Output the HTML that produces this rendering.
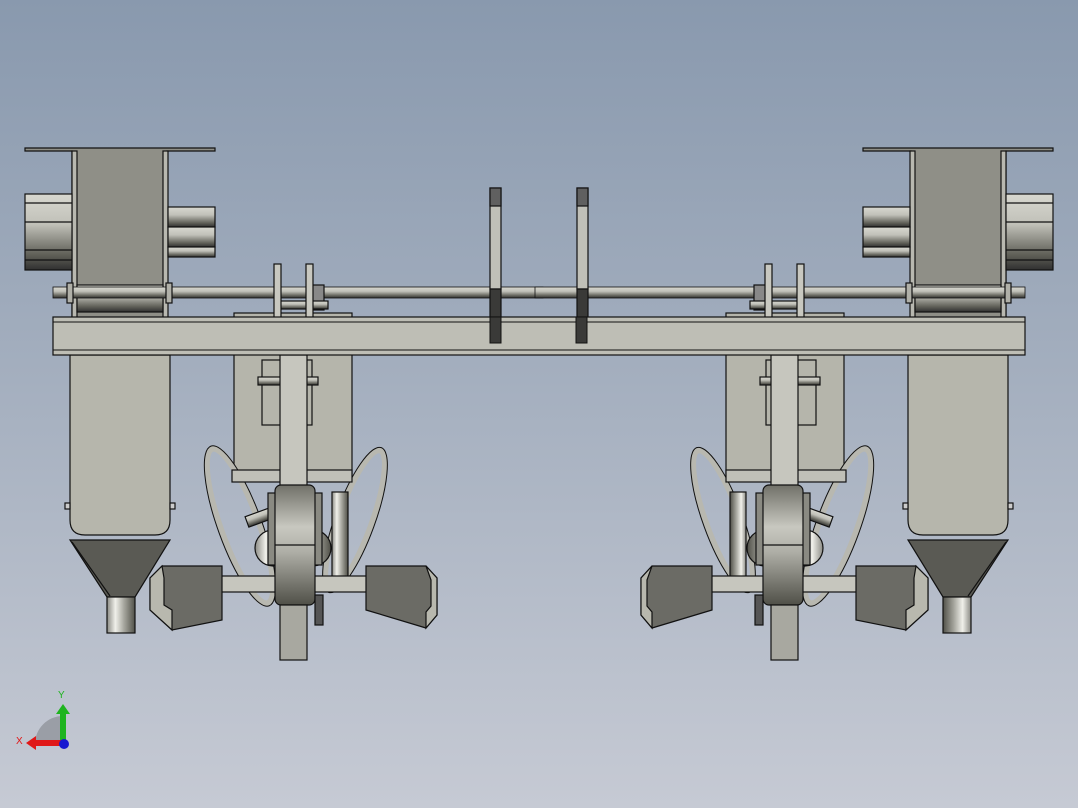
<!DOCTYPE html>
<html><head><style>
html,body{margin:0;padding:0;width:1078px;height:808px;overflow:hidden}
body{background:linear-gradient(#8999ae 0%,#a3aebe 45%,#c6cad4 100%)}
svg{position:absolute;left:0;top:0}
</style></head><body>
<svg width="1078" height="808" viewBox="0 0 1078 808">
<defs>
<linearGradient id="cylH" x1="0" y1="0" x2="0" y2="1">
<stop offset="0" stop-color="#d8d8d0"/><stop offset=".4" stop-color="#c0c0b8"/><stop offset=".8" stop-color="#606058"/><stop offset="1" stop-color="#303030"/></linearGradient>
<linearGradient id="cylV" x1="0" y1="0" x2="1" y2="0">
<stop offset="0" stop-color="#8a8a84"/><stop offset=".3" stop-color="#f0f0ea"/><stop offset=".6" stop-color="#a8a8a0"/><stop offset="1" stop-color="#505048"/></linearGradient>
<linearGradient id="wheel" x1="0" y1="0" x2="0" y2="1">
<stop offset="0" stop-color="#707068"/><stop offset=".35" stop-color="#c8c8c0"/><stop offset=".55" stop-color="#b0b0a8"/><stop offset="1" stop-color="#505048"/></linearGradient>
<g id="half" stroke="#111" stroke-width="1.2">
<path d="M25 148H215V151H167V318H72V151H25Z" fill="#8f8f87"/>
<rect x="72" y="151" width="5" height="167" fill="#b8b8b0"/>
<rect x="163" y="151" width="5" height="167" fill="#b8b8b0"/>
<rect x="25" y="194" width="47" height="76" fill="url(#cylH)"/>
<line x1="25" y1="203" x2="72" y2="203"/><line x1="25" y1="222" x2="72" y2="222"/><line x1="25" y1="250" x2="72" y2="250"/><line x1="25" y1="260" x2="72" y2="260"/>
<rect x="168" y="207" width="47" height="20" fill="url(#cylH)"/>
<rect x="168" y="227" width="47" height="20" fill="url(#cylH)"/>
<rect x="168" y="247" width="47" height="10" fill="url(#cylH)"/>
<rect x="77" y="285" width="86" height="27" fill="url(#cylH)"/>
<rect x="53" y="287" width="490" height="11" fill="url(#cylH)" stroke-width="0.8"/>
<rect x="67" y="283" width="6" height="20" fill="#b0b0a8"/>
<rect x="166" y="283" width="6" height="20" fill="#b0b0a8"/>
<rect x="312" y="285" width="12" height="25" fill="#888"/>
<rect x="280" y="301" width="48" height="8" fill="url(#cylH)"/>
<rect x="234" y="313" width="118" height="162" fill="#b5b5ab"/>
<rect x="274" y="264" width="7" height="54" fill="#c8c8c0"/>
<rect x="306" y="264" width="7" height="54" fill="#c8c8c0"/>
<path d="M70 355H170V520Q170 535 155 535H85Q70 535 70 520Z" fill="#b6b6ac"/>
<rect x="170" y="503" width="5" height="6" fill="#ccc"/><rect x="65" y="503" width="5" height="6" fill="#ccc"/>
<path d="M70 540H170L135 597H107Z" fill="#5a5a54"/>
<path d="M72 542L110 596" fill="none"/>
<rect x="107" y="597" width="28" height="36" fill="url(#cylV)"/>
<ellipse cx="240" cy="526" rx="17" ry="80" transform="rotate(-20 240 526)" fill="none" stroke="#111"/>
<ellipse cx="240" cy="526" rx="19" ry="82" transform="rotate(-20 240 526)" fill="none" stroke="#b8b8b0" stroke-width="6"/>
<ellipse cx="240" cy="526" rx="22" ry="85" transform="rotate(-20 240 526)" fill="none" stroke="#111" stroke-width="1"/>
<ellipse cx="355" cy="520" rx="15" ry="72" transform="rotate(20 355 520)" fill="none" stroke="#111"/>
<ellipse cx="355" cy="520" rx="17" ry="74" transform="rotate(20 355 520)" fill="none" stroke="#b8b8b0" stroke-width="6"/>
<ellipse cx="355" cy="520" rx="20" ry="77" transform="rotate(20 355 520)" fill="none" stroke="#111" stroke-width="1"/>
<rect x="246" y="512" width="26" height="11" fill="url(#cylH)" transform="rotate(-20 259 517)"/>
<circle cx="273" cy="548" r="18" fill="url(#cylV)"/>
<circle cx="313" cy="548" r="18" fill="url(#cylV)"/>
<rect x="232" y="470" width="120" height="12" fill="#c0c0b8"/>
<rect x="262" y="360" width="50" height="65" fill="#b5b5ab"/>
<rect x="258" y="377" width="60" height="8" fill="url(#cylH)"/>
<rect x="280" y="355" width="27" height="135" fill="#c6c6be"/>
<rect x="332" y="492" width="16" height="92" fill="url(#cylV)"/>
<rect x="268" y="493" width="54" height="72" fill="#8a8a82"/>
<rect x="210" y="576" width="167" height="16" fill="#c6c6be"/>
<path d="M162 566H222V620L172 630L150 610V578Z" fill="#6b6b65"/>
<path d="M162 566L150 578V610L172 630V610L164 605V578Z" fill="#b8b8ae"/>
<path d="M366 566H426L437 578V615L426 628L366 610Z" fill="#6b6b65"/>
<path d="M426 566L437 578V615L426 628V612L431 606V580Z" fill="#b8b8ae"/>
<rect x="275" y="485" width="40" height="120" rx="6" fill="url(#wheel)"/>
<line x1="275" y1="545" x2="315" y2="545"/>
<rect x="280" y="605" width="27" height="55" fill="#a8a8a0"/>
<rect x="315" y="595" width="8" height="30" fill="#555"/>
<rect x="490" y="188" width="11" height="101" fill="#c0c0b8"/>
<rect x="490" y="188" width="11" height="18" fill="#606060"/>
<rect x="490" y="289" width="11" height="54" fill="#3a3a38"/>
</g>
</defs>
<use href="#half"/>
<use href="#half" transform="translate(1078 0) scale(-1 1)"/>
<rect x="53" y="317" width="972" height="38" fill="#bebeb5" stroke="#111" stroke-width="1.2"/>
<line x1="53" y1="322" x2="1025" y2="322" stroke="#111"/>
<line x1="53" y1="350" x2="1025" y2="350" stroke="#111"/>
<rect x="490" y="317" width="11" height="26" fill="#3a3a38" stroke="#111"/>
<rect x="576" y="317" width="11" height="26" fill="#3a3a38" stroke="#111"/>
<path d="M35 744A28 28 0 0 1 63 716V744Z" fill="#9a9ea6"/>
<rect x="60" y="712" width="6" height="32" fill="#1fb41f"/>
<path d="M56 714L63 704L70 714Z" fill="#1fb41f"/>
<rect x="34" y="740" width="28" height="6" fill="#e01818"/>
<path d="M36 736L26 743L36 750Z" fill="#e01818"/>
<circle cx="64" cy="744" r="5" fill="#1818d0"/>
<text x="58" y="698" font-family="Liberation Sans,sans-serif" font-size="10" fill="#1fb41f">Y</text>
<text x="16" y="744" font-family="Liberation Sans,sans-serif" font-size="10" fill="#e01818">X</text>
</svg>
</body></html>
